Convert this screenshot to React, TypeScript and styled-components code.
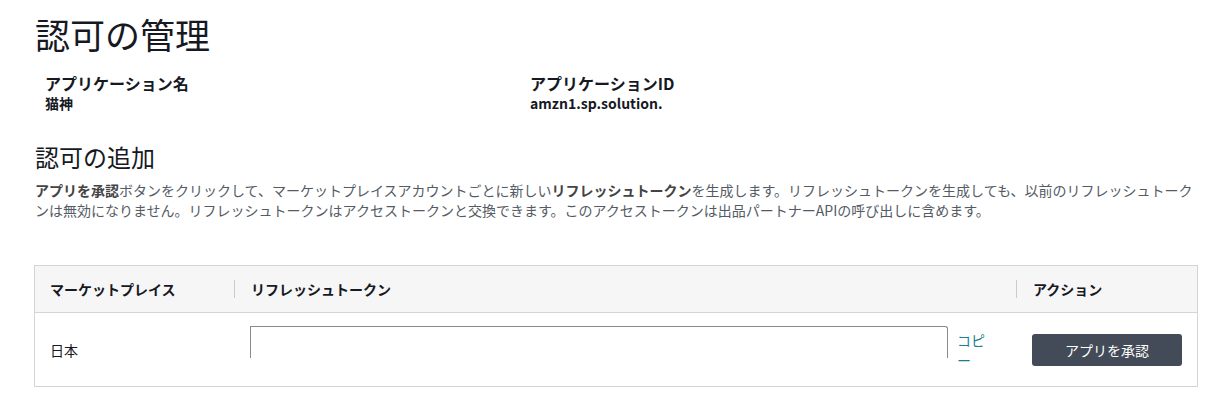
import styled, { createGlobalStyle } from "styled-components";

const GlobalStyle = createGlobalStyle`
  body {
    margin: 0;
    background: #fff;
    font-family: "Noto Sans CJK JP", "Noto Sans", sans-serif;
    color: #16191f;
  }
`;

function App() {
  return (
    <>
      <GlobalStyle />
      <Page>
        <Title>認可の管理</Title>
        <Details>
          <DetailItem>
            <DetailLabel>アプリケーション名</DetailLabel>
            <DetailValue>猫神</DetailValue>
          </DetailItem>
          <DetailItem>
            <DetailLabel>アプリケーションID</DetailLabel>
            <DetailValue>amzn1.sp.solution.</DetailValue>
          </DetailItem>
        </Details>

        <SectionTitle>認可の追加</SectionTitle>
        <Description>
          <strong>アプリを承認</strong>
          ボタンをクリックして、マーケットプレイスアカウントごとに新しい
          <strong>リフレッシュトークン</strong>
          を生成します。リフレッシュトークンを生成しても、以前のリフレッシュトークンは無効になりません。リフレッシュトークンはアクセストークンと交換できます。このアクセストークンは出品パートナーAPIの呼び出しに含めます。
        </Description>

        <Table>
          <HeaderRow>
            <HeaderCell>マーケットプレイス</HeaderCell>
            <HeaderCell $divider>リフレッシュトークン</HeaderCell>
            <HeaderCell $divider>アクション</HeaderCell>
          </HeaderRow>
          <BodyRow>
            <BodyCell>日本</BodyCell>
            <TokenCell>
              <TokenBox />
              <CopyLink href="#">コピー</CopyLink>
            </TokenCell>
            <BodyCell $pad={16}>
              <AuthorizeButton>アプリを承認</AuthorizeButton>
            </BodyCell>
          </BodyRow>
        </Table>
      </Page>
    </>
  );
}

export default App;

const Page = styled.main`
  padding: 12px 27px 0 35px;
`;

const Title = styled.h1`
  margin: 0;
  font-size: 35px;
  font-weight: 400;
  line-height: 44px;
`;

const Details = styled.div`
  display: grid;
  grid-template-columns: 485px 1fr;
  padding: 17px 0 0 10px;
`;

const DetailItem = styled.div`
  display: flex;
  flex-direction: column;
`;

const DetailLabel = styled.div`
  font-size: 16px;
  font-weight: 700;
  line-height: 20px;
`;

const DetailValue = styled.div`
  font-size: 14px;
  font-weight: 700;
  line-height: 20px;
`;

const SectionTitle = styled.h2`
  margin: 29px 0 0;
  font-size: 24px;
  font-weight: 400;
  line-height: 30px;
`;

const Description = styled.p`
  margin: 8px 0 0;
  font-size: 14px;
  line-height: 20px;
  color: #545b64;

  strong {
    font-weight: 700;
    color: #444;
  }
`;

const Table = styled.div`
  margin: 45px 0 0 -1px;
  border: 1px solid #d5d5d5;
`;

const HeaderRow = styled.div`
  display: grid;
  grid-template-columns: 199px 1fr 181px;
  height: 46px;
  background: #f6f6f6;
  border-bottom: 1px solid #d5d5d5;
`;

const HeaderCell = styled.div<{ $divider?: boolean }>`
  position: relative;
  display: flex;
  align-items: center;
  padding: 0 15px 0 ${(p) => (p.$divider ? 17 : 15)}px;
  font-size: 14px;
  font-weight: 700;

  &::before {
    content: "";
    display: ${(p) => (p.$divider ? "block" : "none")};
    position: absolute;
    left: 0;
    top: 14px;
    height: 18px;
    border-left: 1px solid #c8cccc;
  }
`;

const BodyRow = styled.div`
  display: grid;
  grid-template-columns: 199px 1fr 181px;
  height: 73px;
`;

const BodyCell = styled.div<{ $pad?: number }>`
  display: flex;
  align-items: center;
  padding: 0 15px 0 ${(p) => p.$pad ?? 15}px;
  font-size: 14px;
`;

const TokenCell = styled.div`
  display: flex;
  align-items: center;
  gap: 9px;
  padding: 0 31px 0 16px;
`;

const TokenBox = styled.div`
  flex: 1;
  align-self: flex-start;
  margin-top: 13px;
  height: 31px;
  border: 1px solid #8a8a8a;
  border-bottom: none;
  border-top-right-radius: 3px;
`;

const CopyLink = styled.a`
  width: 28px;
  font-size: 14px;
  line-height: 20px;
  color: #1d7c8f;
  text-decoration: none;
`;

const AuthorizeButton = styled.button`
  width: 150px;
  height: 32px;
  border: none;
  border-radius: 3px;
  background: #424b57;
  color: #fff;
  font-family: "Noto Sans CJK JP", "Noto Sans", sans-serif;
  font-size: 14px;
  cursor: pointer;
`;
